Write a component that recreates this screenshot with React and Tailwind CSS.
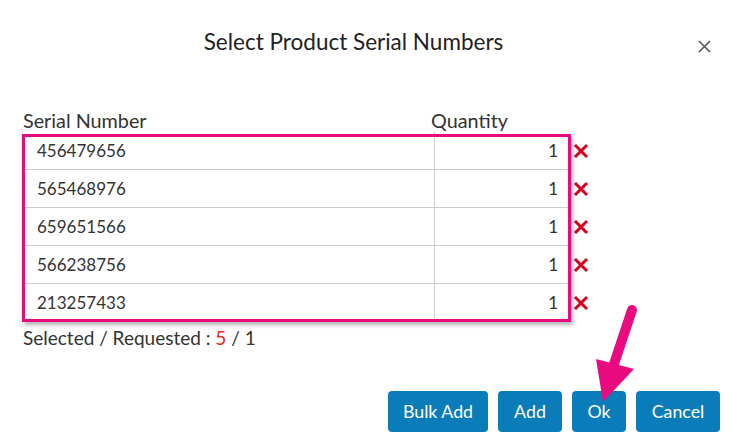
import React from "react";

const rows = ["456479656", "565468976", "659651566", "566238756", "213257433"];

export default function App() {
  return (
    <div className="relative w-[733px] h-[443px] bg-white text-[#333] font-['Lato','Noto_Sans',sans-serif] overflow-hidden">
      {/* Title */}
      <div className="relative pt-[28px] h-[54px] pr-[26px]">
        <div className="text-center text-[22.5px] leading-[28px] text-[#222]">Select Product Serial Numbers</div>
        <button className="absolute right-[22px] top-[39px] w-[14px] h-[14px] flex items-center justify-center">
          <svg width="13" height="13" viewBox="0 0 13 13">
            <path d="M1 1 L12 12 M12 1 L1 12" stroke="#555" strokeWidth="1.6" />
          </svg>
        </button>
      </div>

      <div className="px-[22px]">
        {/* column headers */}
        <div className="mt-[54px] flex text-[19.8px] leading-[24px]">
          <div className="w-[409px] pl-[1px]">Serial Number</div>
          <div>Quantity</div>
        </div>

        {/* table */}
        <div className="relative w-[548px]">
          {rows.map((r, i) => (
            <div key={r} className="relative flex h-[38px] border-b border-[#ccc] text-[17px]">
              <div className="w-[413px] flex items-center pl-[15px] border-r border-[#ccc]">{r}</div>
              <div className="flex-1 flex items-center justify-end pr-[12px]">1</div>
              <div className="absolute left-[551px] top-0 h-full flex items-center">
                <svg width="16" height="16" viewBox="0 0 16 16">
                  <path d="M2 2 L14 14 M14 2 L2 14" stroke="#d9001b" strokeWidth="3" />
                </svg>
              </div>
            </div>
          ))}
          <div className="absolute left-0 top-[2px] w-[549px] h-[188px] border-[3px] border-[#ea0a80] shadow-[2px_3px_4px_rgba(0,0,0,0.3)] pointer-events-none" />
        </div>

        {/* summary */}
        <div className="mt-[5px] text-[19px] leading-[22px] pl-[1px]">
          Selected / Requested : <span className="text-[#e8271d]">5</span> / 1
        </div>
      </div>

      {/* buttons */}
      <div className="mt-[42px] flex justify-end gap-[10px] pr-[13px]">
        <button className="h-[41px] w-[100px] rounded-[4px] bg-[#0a7cba] text-white text-[17.8px]">Bulk Add</button>
        <button className="h-[41px] w-[64px] rounded-[4px] bg-[#0a7cba] text-white text-[17.8px]">Add</button>
        <button className="h-[41px] w-[54px] rounded-[4px] bg-[#0a7cba] text-white text-[17.8px]">Ok</button>
        <button className="h-[41px] w-[84px] rounded-[4px] bg-[#0a7cba] text-white text-[17.8px]">Cancel</button>
      </div>

      {/* annotation arrow */}
      <svg className="absolute left-0 top-0 pointer-events-none" width="733" height="443">
        <line x1="632" y1="310" x2="614" y2="364" stroke="#ea0a80" strokeWidth="10" strokeLinecap="round" />
        <polygon points="596,359 634,369 603,402" fill="#ea0a80" />
      </svg>
    </div>
  );
}
